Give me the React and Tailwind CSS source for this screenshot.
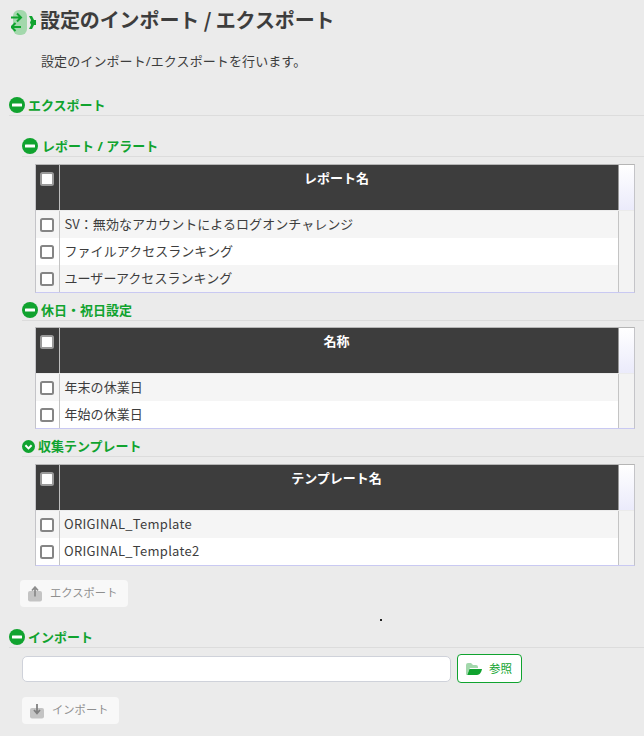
import React from "react";

const CJK = { fontFamily: '"Noto Sans CJK JP", sans-serif' };
const FONT = { fontFamily: '"Noto Sans", "Noto Sans CJK JP", sans-serif' };

function Minus() {
  return (
    <svg width="16" height="16" viewBox="0 0 16 16" className="shrink-0">
      <circle cx="8" cy="8" r="8" fill="#10a32f" />
      <rect x="3" y="6.5" width="10" height="3" rx="0.5" fill="#fff" />
    </svg>
  );
}

function Chevron() {
  return (
    <svg width="13" height="13" viewBox="0 0 13 13" className="shrink-0">
      <circle cx="6.5" cy="6.5" r="6.5" fill="#10a32f" />
      <path d="M3.4 5.3 6.5 8.4 9.6 5.3" fill="none" stroke="#fff" strokeWidth="2" />
    </svg>
  );
}

function Heading({ children, icon, className = "" }) {
  return (
    <div className={`flex items-center border-b border-[#dcdcdc] text-[13px] font-bold leading-[20px] text-[#10a32f] ${className}`}>
      {icon}
      <span>{children}</span>
    </div>
  );
}

function Box({ dark }) {
  return (
    <span
      className={`block h-[14px] w-[14px] rounded-[2.5px] border-2 ${
        dark ? "border-[#9a9a9a] bg-white" : "border-[#858585] bg-white"
      }`}
    />
  );
}

function DataTable({ title, rows, rowText = "pl-[4.5px] tracking-[0.05px]" }) {
  return (
    <div style={CJK} className="ml-[35px] w-[600px] border border-[#c4c4c8] border-b-[#c9c9f2] border-t-[#b5b5b5]">
      <div className="flex h-[45px]">
        <div className="w-[24px] shrink-0 border-r border-[#bdbdbd] bg-[#3d3d3d] pl-[4px] pt-[7px]">
          <Box dark />
        </div>
        <div className="flex-1 bg-[#3d3d3d] pr-[5px] pt-[3px] text-center text-[13px] font-bold text-white">{title}</div>
        <div className="w-[16px] shrink-0 border-l border-[#9a9a9a] bg-gradient-to-b from-white to-[#ebebfb]" />
      </div>
      {rows.map((r, i) => (
        <div key={r} className={`flex h-[27px] items-center ${i === 0 ? "mt-[1px]" : ""} ${i % 2 === 0 ? "bg-[#f5f5f5]" : "bg-white"}`}>
          <div className="flex h-full w-[24px] shrink-0 items-center border-r border-[#c4c4c4] pl-[4px]">
            <Box />
          </div>
          <div className={`flex-1 pb-[2px] text-[13px] text-[#3d3d3d] ${rowText}`}>{r}</div>
          <div className="h-full w-[16px] shrink-0 border-l border-[#c4c4c4] bg-[#f3f3f3]" />
        </div>
      ))}
    </div>
  );
}

function TrayIcon({ up }) {
  return (
    <svg width="16" height="16" viewBox="0 0 16 16" className="shrink-0">
      <rect x="1" y="5" width="14" height="10.5" rx="2" fill="#c4c4c4" />
      {up ? (
        <path d="M8 10.5V2M5 4.5 8 1.2l3 3.3" fill="none" stroke="#8c8c8c" strokeWidth="1.8" />
      ) : (
        <path d="M8 1v8.5M5 7l3 3.3L11 7" fill="none" stroke="#7f7f7f" strokeWidth="1.8" />
      )}
    </svg>
  );
}

function GreyButton({ up, width, children, className = "" }) {
  return (
    <div className={`flex h-[27px] items-center rounded-[4px] bg-[#f8f8f8] text-[11.3px] text-[#8f8f8f] ${width} ${className}`}>
      <TrayIcon up={up} />
      <span>{children}</span>
    </div>
  );
}

export default function App() {
  return (
    <div style={FONT} className="relative h-[736px] w-[644px] overflow-hidden bg-[#ebebeb] text-[#3d3d3d]">
      <div className="flex h-[40px] items-start pl-[11px] pt-[8px]">
        <div className="relative mt-[2px] h-[26px] w-[29px] shrink-0">
          <div className="absolute left-[2px] top-0 h-[25px] w-[14px] rounded-[6px] bg-[#a3d8ac]" />
          <svg width="29" height="26" viewBox="0 0 29 26" className="absolute left-0 top-0">
            <path d="M0 7.5h9M6 3.5l4 4-4 4" fill="none" stroke="#10a32f" strokeWidth="2" />
            <path d="M10 17H1M4.5 13l-4 4 4 4" fill="none" stroke="#10a32f" strokeWidth="2" />
            <path d="M18 6h3l2 4h2v5h-2l-2 4h-3l2-4-1-2.5 1-2.5z" fill="#10a32f" />
          </svg>
        </div>
        <h1 style={CJK} className="-mt-[1px] text-[20px] font-bold leading-[26px] tracking-[-0.1px] text-[#3d3d3d]">設定のインポート / エクスポート</h1>
      </div>
      <p className="pl-[41px] pt-[11px] text-[13px] leading-[20px] tracking-[0.1px] text-[#3d3d3d]">設定のインポート/エクスポートを行います。</p>

      <Heading icon={<Minus />} className="mt-[24px] ml-[9px] h-[21px] gap-[3px]">エクスポート</Heading>

      <Heading icon={<Minus />} className="mt-[20px] ml-[22px] h-[21px] gap-[4px]">レポート / アラート</Heading>
      <div className="mt-[7px]">
        <DataTable
          title="レポート名"
          rows={["SV：無効なアカウントによるログオンチャレンジ", "ファイルアクセスランキング", "ユーザーアクセスランキング"]}
        />
      </div>

      <Heading icon={<Minus />} className="mt-[7px] ml-[22px] h-[21px] gap-[3px]">休日・祝日設定</Heading>
      <div className="mt-[6px]">
        <DataTable title="名称" rows={["年末の休業日", "年始の休業日"]} />
      </div>

      <Heading icon={<Chevron />} className="mt-[7px] ml-[22px] h-[21px] gap-[3px]">収集テンプレート</Heading>
      <div className="mt-[7px]">
        <DataTable title="テンプレート名" rowText="pl-[4px] tracking-[0.3px]" rows={["ORIGINAL_Template", "ORIGINAL_Template2"]} />
      </div>

      <GreyButton up width="w-[108px] gap-[7px] pl-[7px]" className="ml-[20px] mt-[14px]">エクスポート</GreyButton>

      <span className="absolute left-[380px] top-[619px] h-[2px] w-[2px] bg-[#222]" />

      <Heading icon={<Minus />} className="mt-[20px] ml-[9px] h-[21px] gap-[3px]">インポート</Heading>

      <div className="ml-[22px] mt-[6px] flex h-[29px] items-center gap-[6px]">
        <input
          readOnly
          className="h-[26px] w-[429px] rounded-[5px] border border-[#cfd2da] bg-white"
        />
        <div className="flex h-[29px] w-[65px] items-center gap-[7px] rounded-[4px] border border-[#10a32f] bg-white pl-[8px] text-[11.5px] text-[#10a32f]">
          <svg width="16" height="12" viewBox="0 0 16 12" className="shrink-0">
            <path d="M0 2a2 2 0 0 1 2-2h3l2 2h3a2 2 0 0 1 2 2v1H4L1 12H1a1 1 0 0 1-1-1z" fill="#a3d8ac" />
            <path d="M3.5 6H16c-.5 3-2.5 6-5 6H1.2z" fill="#10a32f" />
          </svg>
          <span>参照</span>
        </div>
      </div>

      <GreyButton width="w-[97px] gap-[7px] pl-[7px]" className="ml-[22px] mt-[14px]">インポート</GreyButton>
    </div>
  );
}
